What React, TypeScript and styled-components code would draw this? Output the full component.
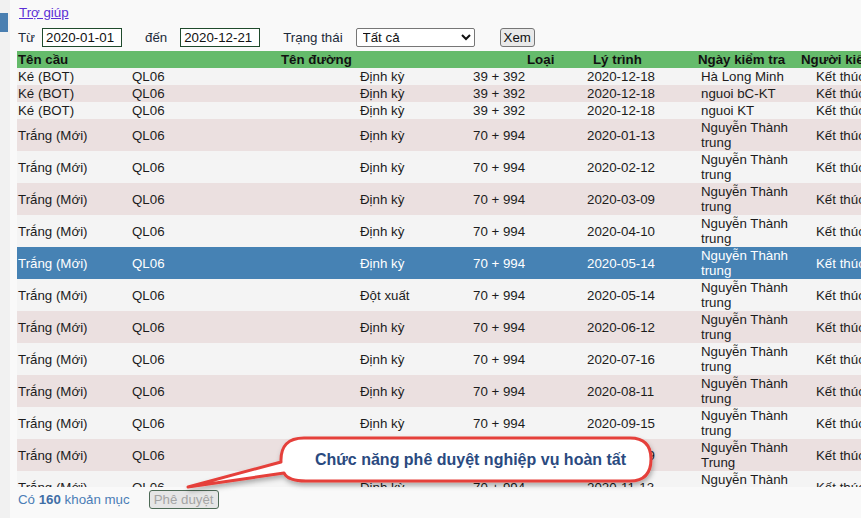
import React from 'react';
import styled, { createGlobalStyle } from 'styled-components';

const GlobalStyle = createGlobalStyle`
  html, body {
    margin: 0;
    padding: 0;
    background: #f9f9f9;
    overflow: hidden;
  }
  body {
    font-family: "Liberation Sans", Arial, sans-serif;
    font-size: 13.3px;
    color: #1c1c1c;
  }
`;

type Row = {
  bridge: string;
  road: string;
  kind: string;
  km: string;
  date: string;
  person: string;
  status: string;
  tall?: boolean;
  selected?: boolean;
};

const rows: Row[] = [
  { bridge: 'Ké (BOT)', road: 'QL06', kind: 'Định kỳ', km: '39 + 392', date: '2020-12-18', person: 'Hà Long Minh', status: 'Kết thúc' },
  { bridge: 'Ké (BOT)', road: 'QL06', kind: 'Định kỳ', km: '39 + 392', date: '2020-12-18', person: 'nguoi bC-KT', status: 'Kết thúc' },
  { bridge: 'Ké (BOT)', road: 'QL06', kind: 'Định kỳ', km: '39 + 392', date: '2020-12-18', person: 'nguoi KT', status: 'Kết thúc' },
  { bridge: 'Trắng (Mới)', road: 'QL06', kind: 'Định kỳ', km: '70 + 994', date: '2020-01-13', person: 'Nguyễn Thành trung', status: 'Kết thúc', tall: true },
  { bridge: 'Trắng (Mới)', road: 'QL06', kind: 'Định kỳ', km: '70 + 994', date: '2020-02-12', person: 'Nguyễn Thành trung', status: 'Kết thúc', tall: true },
  { bridge: 'Trắng (Mới)', road: 'QL06', kind: 'Định kỳ', km: '70 + 994', date: '2020-03-09', person: 'Nguyễn Thành trung', status: 'Kết thúc', tall: true },
  { bridge: 'Trắng (Mới)', road: 'QL06', kind: 'Định kỳ', km: '70 + 994', date: '2020-04-10', person: 'Nguyễn Thành trung', status: 'Kết thúc', tall: true },
  { bridge: 'Trắng (Mới)', road: 'QL06', kind: 'Định kỳ', km: '70 + 994', date: '2020-05-14', person: 'Nguyễn Thành trung', status: 'Kết thúc', tall: true, selected: true },
  { bridge: 'Trắng (Mới)', road: 'QL06', kind: 'Đột xuất', km: '70 + 994', date: '2020-05-14', person: 'Nguyễn Thành trung', status: 'Kết thúc', tall: true },
  { bridge: 'Trắng (Mới)', road: 'QL06', kind: 'Định kỳ', km: '70 + 994', date: '2020-06-12', person: 'Nguyễn Thành trung', status: 'Kết thúc', tall: true },
  { bridge: 'Trắng (Mới)', road: 'QL06', kind: 'Định kỳ', km: '70 + 994', date: '2020-07-16', person: 'Nguyễn Thành trung', status: 'Kết thúc', tall: true },
  { bridge: 'Trắng (Mới)', road: 'QL06', kind: 'Định kỳ', km: '70 + 994', date: '2020-08-11', person: 'Nguyễn Thành trung', status: 'Kết thúc', tall: true },
  { bridge: 'Trắng (Mới)', road: 'QL06', kind: 'Định kỳ', km: '70 + 994', date: '2020-09-15', person: 'Nguyễn Thành trung', status: 'Kết thúc', tall: true },
  { bridge: 'Trắng (Mới)', road: 'QL06', kind: 'Định kỳ', km: '70 + 994', date: '2020-10-19', person: 'Nguyễn Thành Trung', status: 'Kết thúc', tall: true },
  { bridge: 'Trắng (Mới)', road: 'QL06', kind: 'Định kỳ', km: '70 + 994', date: '2020-11-13', person: 'Nguyễn Thành trung', status: 'Kết thúc', tall: true },
];

const Page = styled.div`
  display: flex;
  width: 861px;
  height: 518px;
  overflow: hidden;
`;

const SideStrip = styled.div`
  flex: 0 0 10px;
  background: #f1f1f1;
  padding-top: 13px;
`;

const SideTab = styled.div`
  width: 8px;
  height: 19px;
  background: #4a7fb1;
`;

const Main = styled.div`
  flex: 1;
  min-width: 0;
  padding: 4px 0 0 7px;
  position: relative;
`;

const HelpLink = styled.a`
  display: inline-block;
  margin-left: 2px;
  line-height: 18px;
  color: #5b2fd6;
  text-decoration: underline;
  cursor: pointer;
`;

const FilterBar = styled.div`
  display: flex;
  align-items: center;
  height: 20px;
  margin: 5px 0 4px 1px;
  white-space: nowrap;
`;

const FilterLabel = styled.span<{ $ml?: number }>`
  margin-left: ${(p) => p.$ml ?? 0}px;
  color: #1c2a3a;
`;

const DateInput = styled.input<{ $ml: number }>`
  margin-left: ${(p) => p.$ml}px;
  width: 80px;
  height: 19px;
  box-sizing: border-box;
  border: 1px solid #1f4a2c;
  background: #fff;
  padding: 0 3px;
  font: inherit;
  color: #111;
  outline: none;
`;

const StatusSelect = styled.select`
  margin-left: 13px;
  width: 119px;
  height: 19px;
  box-sizing: border-box;
  border: 1px solid #767676;
  border-radius: 2px;
  background: #fff;
  padding: 0 2px;
  font: inherit;
  color: #111;
`;

const ViewButton = styled.button`
  margin-left: 25px;
  height: 19px;
  padding: 0 3px;
  box-sizing: border-box;
  border: 1px solid #767676;
  border-radius: 3px;
  background: #e9e9e9;
  font: inherit;
  color: #111;
`;

const Table = styled.div`
  width: 920px;
`;

const HeaderRow = styled.div`
  display: grid;
  grid-template-columns: 263px 246px 66px 105px 103px 1fr;
  height: 17px;
  line-height: 17px;
  background: #65bb6b;
  font-weight: bold;
  color: #111;
  white-space: nowrap;
  padding-left: 1px;
`;

const Body = styled.div`
  height: 419px;
  overflow: hidden;
`;

const BodyRow = styled.div<{ $tall?: boolean; $stripe: boolean; $selected?: boolean }>`
  display: grid;
  grid-template-columns: 114px 228px 113px 114px 114px 115px 1fr;
  align-items: center;
  height: ${(p) => (p.$tall ? 32 : 17)}px;
  line-height: 15px;
  background: ${(p) => (p.$selected ? '#4682b4' : p.$stripe ? '#ebe0e0' : '#f4f4f4')};
  color: ${(p) => (p.$selected ? '#fff' : '#1c1c1c')};
`;

const Cell = styled.div<{ $wrap?: boolean }>`
  padding-left: 1px;
  white-space: ${(p) => (p.$wrap ? 'normal' : 'nowrap')};
  overflow: hidden;
`;

const Footer = styled.div`
  display: flex;
  align-items: center;
  height: 25px;
  padding-left: 1px;
  color: #4b7db6;
`;

const Count = styled.b`
  color: #3f6ea6;
`;

const ApproveButton = styled.button`
  margin-left: 19px;
  height: 19px;
  padding: 0 4px;
  box-sizing: border-box;
  border: 1px solid #4e6a56;
  border-radius: 3px;
  background: #e6e6e6;
  font: inherit;
  color: #a4a4a4;
`;

const Callout = styled.div`
  position: absolute;
  left: 170px;
  top: 431px;
  width: 480px;
  height: 62px;
`;

const CalloutShape = styled.svg`
  position: absolute;
  inset: 0;
  overflow: visible;
`;

const CalloutText = styled.div`
  position: absolute;
  left: 106px;
  top: 7px;
  width: 369px;
  height: 43px;
  display: flex;
  align-items: center;
  justify-content: center;
  font-size: 16px;
  font-weight: bold;
  color: #2a4a7f;
  white-space: nowrap;
`;

const App: React.FC = () => {
  return (
    <>
      <GlobalStyle />
      <Page>
        <SideStrip>
          <SideTab />
        </SideStrip>
        <Main>
          <HelpLink>Trợ giúp</HelpLink>
          <FilterBar>
            <FilterLabel>Từ</FilterLabel>
            <DateInput $ml={7} defaultValue="2020-01-01" />
            <FilterLabel $ml={23}>đến</FilterLabel>
            <DateInput $ml={13} defaultValue="2020-12-21" />
            <FilterLabel $ml={23}>Trạng thái</FilterLabel>
            <StatusSelect defaultValue="all">
              <option value="all">Tất cả</option>
            </StatusSelect>
            <ViewButton>Xem</ViewButton>
          </FilterBar>

          <Table>
            <HeaderRow>
              <span>Tên cầu</span>
              <span>Tên đường</span>
              <span>Loại</span>
              <span>Lý trình</span>
              <span>Ngày kiểm tra</span>
              <span>Người kiểm tra</span>
            </HeaderRow>
            <Body>
              {rows.map((r, i) => (
                <BodyRow key={i} $tall={r.tall} $stripe={i % 2 === 1} $selected={r.selected}>
                  <Cell>{r.bridge}</Cell>
                  <Cell>{r.road}</Cell>
                  <Cell>{r.kind}</Cell>
                  <Cell>{r.km}</Cell>
                  <Cell>{r.date}</Cell>
                  <Cell $wrap>{r.person}</Cell>
                  <Cell>{r.status}</Cell>
                </BodyRow>
              ))}
            </Body>
          </Table>

          <Footer>
            <span>
              Có <Count>160</Count> khoản mục
            </span>
            <ApproveButton disabled>Phê duyệt</ApproveButton>
          </Footer>

          <Callout>
            <CalloutShape width="480" height="62" viewBox="0 0 480 62">
              <defs>
                <filter id="calloutShadow" x="-10%" y="-30%" width="120%" height="170%">
                  <feDropShadow dx="1" dy="3" stdDeviation="2.5" floodColor="#000" floodOpacity="0.3" />
                </filter>
              </defs>
              <path
                d="M124 7 H450 Q471 7 471 28 Q471 50 450 50 H126 Q108 50 104 42 L8 56 L101 31 Q100 7 124 7 Z"
                fill="#fff"
                stroke="#e5403b"
                strokeWidth="3"
                strokeLinejoin="round"
                filter="url(#calloutShadow)"
              />
            </CalloutShape>
            <CalloutText>Chức năng phê duyệt nghiệp vụ hoàn tất</CalloutText>
          </Callout>
        </Main>
      </Page>
    </>
  );
};

export default App;
